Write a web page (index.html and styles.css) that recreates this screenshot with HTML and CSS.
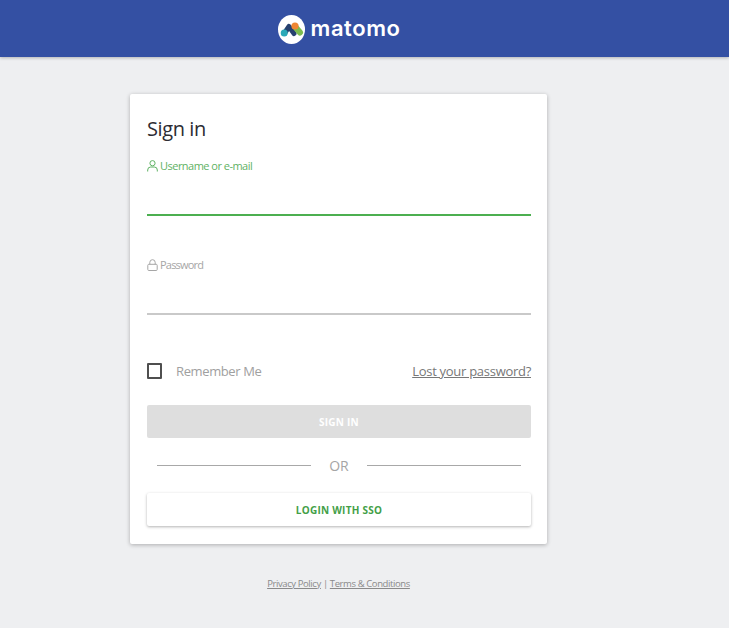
FILE: index.html
```html
<!DOCTYPE html>
<html lang="en">
<head>
<meta charset="utf-8">
<title>Sign in - Matomo</title>
<link rel="stylesheet" href="styles.css">
</head>
<body>
<header class="topbar">
  <div class="brand">
    <svg class="brand-mark" width="27" height="29" viewBox="0 0 27 29">
      <ellipse cx="13.5" cy="14.5" rx="13.5" ry="14.5" fill="#fff"/>
      <path d="M7 17.5 L11 11.5 L16 18.5" fill="none" stroke="#26406f" stroke-width="5" stroke-linecap="round" stroke-linejoin="round"/>
      <path d="M17 11.5 L22 17.5" fill="none" stroke="#7cbc4e" stroke-width="6" stroke-linecap="round"/>
      <circle cx="6.2" cy="18" r="3.5" fill="#2ba9b8"/>
      <circle cx="17" cy="11" r="3.6" fill="#ef8633"/>
    </svg>
    <span class="brand-name">matomo</span>
  </div>
</header>
<main class="page">
  <section class="card">
    <h1 class="title">Sign in</h1>
    <div class="field field-active">
      <label class="field-label">
        <svg width="11" height="12" viewBox="0 0 11 12" fill="none" stroke="currentColor" stroke-width="1"><circle cx="5.5" cy="3.2" r="2.6"/><path d="M.7 11.5V10a3 3 0 0 1 3-3h3.6a3 3 0 0 1 3 3v1.5"/></svg>
        Username or e-mail
      </label>
    </div>
    <div class="field field-idle">
      <label class="field-label">
        <svg width="11" height="12" viewBox="0 0 11 12" fill="none" stroke="currentColor" stroke-width="1"><rect x=".8" y="5.3" width="9.4" height="6.2" rx="1"/><path d="M2.8 5.3V3.4a2.7 2.7 0 0 1 5.4 0v1.9"/></svg>
        Password
      </label>
    </div>
    <div class="options">
      <label class="remember"><span class="checkbox"></span>Remember Me</label>
      <a class="lost" href="#">Lost your password?</a>
    </div>
    <button class="btn btn-disabled" type="button">SIGN IN</button>
    <div class="divider"><span class="rule"></span><span class="or">OR</span><span class="rule"></span></div>
    <button class="btn btn-sso" type="button">LOGIN WITH SSO</button>
  </section>
  <footer class="legal"><a href="#">Privacy Policy</a> | <a href="#">Terms &amp; Conditions</a></footer>
</main>
</body>
</html>
```
FILE: styles.css
```css
* { box-sizing: border-box; }
html, body { margin: 0; height: 100%; }
body {
  background: #eeeff1;
  font-family: "Open Sans", "Noto Sans", sans-serif;
  color: #2b2b2b;
  overflow: hidden;
}
.topbar {
  height: 57px;
  background: #3450a3;
  box-shadow: 0 1px 3px rgba(0,0,0,.25);
  display: flex;
  justify-content: center;
  padding: 15px 51px 0 0;
}
.brand { display: flex; align-items: flex-start; gap: 6px; height: 29px; }
.brand-mark { display: block; }
.brand-name {
  color: #fff;
  font-family: "Inter", sans-serif;
  font-weight: 600;
  font-size: 22px;
  line-height: 27px;
  letter-spacing: .55px;
}
.page { width: 417px; margin: 37px 0 0 130px; }
.card {
  height: 450px;
  background: #fff;
  border-radius: 2px;
  padding: 20px 16px 0 17px;
  box-shadow: 0 1px 4px rgba(0,0,0,.28);
}
.title {
  margin: 0;
  font-size: 20px;
  font-weight: 400;
  line-height: 30px;
  color: #2d2d33;
  letter-spacing: -.4px;
}
.field { border-bottom: 2px solid #c9c9c9; }
.field-active { height: 67px; margin-top: 5px; border-color: #4caf50; color: #5fb264; padding-top: 8px; }
.field-idle { height: 68px; margin-top: 31px; color: #a6a6a6; padding-top: 9px; }
.field-label {
  display: flex;
  align-items: center;
  gap: 2px;
  height: 17px;
  font-size: 11px;
  line-height: 17px;
  letter-spacing: -.52px;
}
.field-idle .field-label { letter-spacing: -.8px; }
.options {
  display: flex;
  justify-content: space-between;
  align-items: center;
  height: 24px;
  margin-top: 44px;
}
.remember { display: flex; align-items: center; font-size: 13px; color: #a0a0a0; letter-spacing: -.38px; }
.checkbox { width: 15px; height: 16px; border: 2px solid #4f4f4f; border-radius: 1px; margin-right: 14px; }
.lost { font-size: 13px; color: #777; letter-spacing: -.28px; }
.btn {
  display: block;
  width: 100%;
  height: 33px;
  border: 0;
  border-radius: 2px;
  font-family: inherit;
  font-size: 10px;
  font-weight: 700;
  letter-spacing: .25px;
}
.btn-disabled { margin-top: 22px; background: #dedede; color: #fff; }
.divider { display: flex; align-items: center; height: 20px; margin-top: 17px; padding: 0 10px; }
.rule { flex: 1; height: 1px; background: #a8a8a8; }
.or { width: 56px; text-align: center; font-size: 14px; color: #a5a5a5; }
.btn-sso { margin-top: 18px; background: #fff; color: #43a047; box-shadow: 0 1px 3px rgba(0,0,0,.3); }
.legal { margin-top: 32px; text-align: center; font-size: 9.5px; line-height: 16px; color: #8a8a8a; letter-spacing: -.4px; }
.legal a { color: #8a8a8a; }
```
